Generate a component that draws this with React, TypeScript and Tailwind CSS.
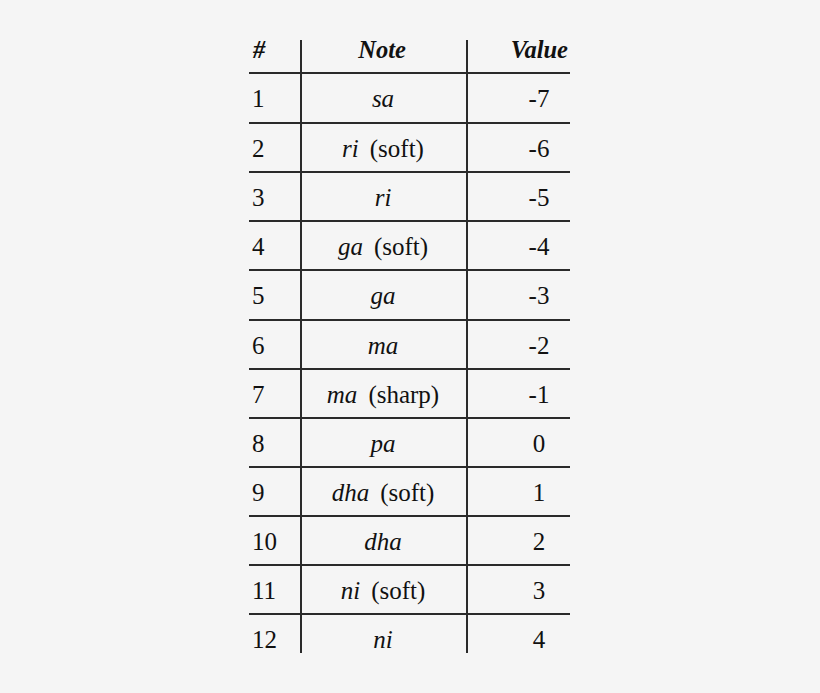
import React from "react";

type Row = { n: string; note: string; mod?: string; value: string; h: string };

const rows: Row[] = [
  { n: "1", note: "sa", value: "-7", h: "h-[50px]" },
  { n: "2", note: "ri", mod: "(soft)", value: "-6", h: "h-[49px]" },
  { n: "3", note: "ri", value: "-5", h: "h-[49px]" },
  { n: "4", note: "ga", mod: "(soft)", value: "-4", h: "h-[49px]" },
  { n: "5", note: "ga", value: "-3", h: "h-[50px]" },
  { n: "6", note: "ma", value: "-2", h: "h-[49px]" },
  { n: "7", note: "ma", mod: "(sharp)", value: "-1", h: "h-[49px]" },
  { n: "8", note: "pa", value: "0", h: "h-[49px]" },
  { n: "9", note: "dha", mod: "(soft)", value: "1", h: "h-[49px]" },
  { n: "10", note: "dha", value: "2", h: "h-[49px]" },
  { n: "11", note: "ni", mod: "(soft)", value: "3", h: "h-[49px]" },
  { n: "12", note: "ni", value: "4", h: "h-[38px]" },
];

export default function App() {
  return (
    <div className="w-[820px] h-[693px] bg-[#f5f5f5] text-[#111] overflow-hidden font-['Liberation_Serif','Times_New_Roman',serif]">
      <div className="ml-[249px] pt-[40px] w-[321px] text-[25px]">
        <div className="flex h-[34px] border-b-2 border-[#2a2a2a] font-bold italic leading-[20px] text-[24.5px]">
          <div className="w-[53px] border-r-2 border-[#2a2a2a] pl-[4px]">#</div>
          <div className="w-[166px] border-r-2 border-[#2a2a2a] text-center pr-[4px]">Note</div>
          <div className="flex-1 text-right pr-[2px]">Value</div>
        </div>
        {rows.map((r, i) => (
          <div
            key={r.n}
            className={`flex ${r.h} ${i < rows.length - 1 ? "border-b-2 border-[#2a2a2a]" : ""} leading-[24px]`}
          >
            <div className="w-[53px] border-r-2 border-[#2a2a2a] pl-[3px] pt-[13px]">{r.n}</div>
            <div className="w-[166px] border-r-2 border-[#2a2a2a] text-center pt-[13px] pr-[2px]">
              <span className="italic">{r.note}</span>
              {r.mod && <span className="ml-[11px]">{r.mod}</span>}
            </div>
            <div className="flex-1 text-center pl-[40px] pt-[13px]">{r.value}</div>
          </div>
        ))}
      </div>
    </div>
  );
}
